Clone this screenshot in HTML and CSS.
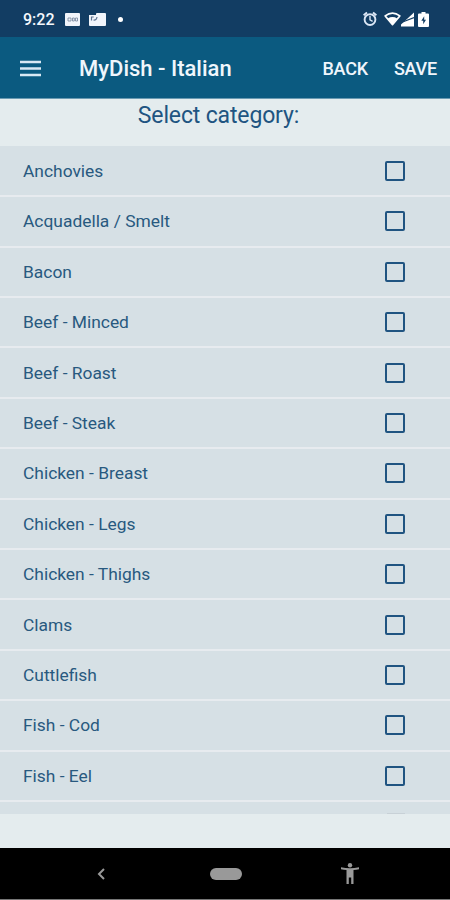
FILE: index.html
```html
<!DOCTYPE html>
<html lang="en">
<head>
    <meta charset="UTF-8">
    <meta name="viewport" content="width=device-width, initial-scale=1.0">
    <title>MyDish - Italian</title>
    <link rel="stylesheet" href="styles.css">
</head>
<body>
    <div class="status-bar">
        <span class="time">9:22</span>
        <svg class="news" width="15" height="13" viewBox="0 0 15 13">
            <rect width="15" height="13" rx="1" fill="#f1f5fb"/>
            <path d="M3 5h3v3H3zM7.5 5h1.8v3H7.5zM10.5 5h2v3h-2z" fill="none" stroke="#73839a" stroke-width="0.8"/>
        </svg>
        <svg class="mail" width="17" height="13" viewBox="0 0 17 13">
            <path d="M0 2h7V1q0-1 1-1h8q1 0 1 1v11q0 1-1 1H1q-1 0-1-1z" fill="#f1f5fb"/>
            <path d="M2.5 7.5V4h2.2M4.5 7q3 .5 3.5-3" fill="none" stroke="#5d7391" stroke-width="1.2"/>
        </svg>
        <span class="dot"></span>
        <svg class="alarm" width="14" height="16" viewBox="0 0 14 16">
            <circle cx="7" cy="8.6" r="5.4" fill="none" stroke="#dce7f5" stroke-width="1.9"/>
            <path d="M.6 4.2 4 1.4M13.4 4.2 10 1.4" stroke="#dce7f5" stroke-width="2"/>
            <path d="M7 5v3.8l2.600 1.600" fill="none" stroke="#dce7f5" stroke-width="1.4"/>
        </svg>
        <svg class="wifi" width="17" height="16" viewBox="0 0 18 16">
            <path d="M1.2 4.700Q9-1 16.800 4.700L9 14z" fill="none" stroke="#fff" stroke-width="1.700" stroke-linejoin="round"/>
            <path d="M4 7.500Q9 4.500 14 7.500L9 14z" fill="#fff"/>
        </svg>
        <svg class="signal" width="13" height="15" viewBox="0 0 14 15">
            <path d="M14 0v15H0v-2z" fill="#fff"/>
            <path d="M1 10.500 14 5.500" stroke="#123d63" stroke-width="1.200"/>
        </svg>
        <svg class="battery" width="11" height="15" viewBox="0 0 11 15">
            <path d="M3.500 0h4v1.500H10q1 0 1 1V14q0 1-1 1H1q-1 0-1-1V2.500q0-1 1-1h2.500z" fill="#fff"/>
            <path d="M6.200 4.200 3.300 8.700h1.900v3.500L8 7.700H6.200z" fill="#123d63"/>
        </svg>
    </div>

    <header class="toolbar">
        <svg class="menu" width="21" height="17" viewBox="0 0 21 17">
            <path d="M0 2h21M0 8.500h21M0 15h21" stroke="#d9e9f4" stroke-width="2.400"/>
        </svg>
        <h1>MyDish - Italian</h1>
        <button type="button">BACK</button>
        <button type="button" class="save">SAVE</button>
    </header>

    <main>
        <h2>Select category:</h2>
        <div class="list">
            <label class="row"><span>Anchovies</span><input type="checkbox"></label>
            <label class="row"><span>Acquadella / Smelt</span><input type="checkbox"></label>
            <label class="row"><span>Bacon</span><input type="checkbox"></label>
            <label class="row"><span>Beef - Minced</span><input type="checkbox"></label>
            <label class="row"><span>Beef - Roast</span><input type="checkbox"></label>
            <label class="row"><span>Beef - Steak</span><input type="checkbox"></label>
            <label class="row"><span>Chicken - Breast</span><input type="checkbox"></label>
            <label class="row"><span>Chicken - Legs</span><input type="checkbox"></label>
            <label class="row"><span>Chicken - Thighs</span><input type="checkbox"></label>
            <label class="row"><span>Clams</span><input type="checkbox"></label>
            <label class="row"><span>Cuttlefish</span><input type="checkbox"></label>
            <label class="row"><span>Fish - Cod</span><input type="checkbox"></label>
            <label class="row"><span>Fish - Eel</span><input type="checkbox"></label>
            <div class="row next"><span class="box-edge"></span></div>
        </div>
    </main>

    <nav class="nav-bar">
        <svg width="8" height="12" viewBox="0 0 8 12">
            <path d="M7 1 2 6l5 5" fill="none" stroke="#999" stroke-width="2"/>
        </svg>
        <span class="home"></span>
        <svg width="18" height="21" viewBox="0 0 18 21">
            <circle cx="9" cy="2.200" r="2.200" fill="#999"/>
            <path d="M0 4.200q9 2 18 0v2q-2.500.6-5.500.9V21h-2.300v-6.500H7.800V21H5.500V7.100Q2.500 6.800 0 6.200z" fill="#999"/>
        </svg>
    </nav>
</body>
</html>
```
FILE: styles.css
```css
* {
    box-sizing: border-box;
}
body {
    margin: 0;
    height: 900px;
    display: flex;
    flex-direction: column;
    overflow: hidden;
    background-color: #e4ecee;
    color: #28597f;
    font-family: Roboto, sans-serif;
}
svg {
    display: block;
    flex: none;
}

.status-bar {
    height: 37px;
    flex: none;
    display: flex;
    align-items: center;
    padding: 1px 21px 0 23px;
    background-color: #123d63;
    color: #f4f8fd;
}
.time {
    width: 42px;
    padding-top: 1px;
    font-size: 16px;
    font-weight: 500;
    line-height: 20px;
}
.mail {
    margin-left: 9px;
}
.dot {
    width: 5px;
    height: 5px;
    margin-left: 12px;
    border-radius: 50%;
    background-color: #fff;
}
.alarm {
    margin-left: auto;
}
.wifi {
    margin-left: 7px;
}
.battery {
    margin-left: 4px;
}

.toolbar {
    height: 62px;
    flex: none;
    display: flex;
    align-items: center;
    padding: 0 13px 0 20px;
    background-color: #0b5a80;
    border-bottom: 1px solid #6a9ab2;
    color: #f0f6fc;
}
.menu {
    margin-top: 1px;
}
.toolbar h1 {
    margin: 3px 0 0 38px;
    font-size: 22px;
    font-weight: 500;
    line-height: 28px;
    white-space: nowrap;
}
.toolbar button {
    margin: 2px 0 0 auto;
    padding: 0;
    border: none;
    background: none;
    color: inherit;
    font: 500 18px/24px Roboto, sans-serif;
    letter-spacing: -0.2px;
}
.toolbar .save {
    margin-left: 26px;
}

main {
    flex: 1;
}
h2 {
    height: 47px;
    margin: 0;
    padding: 3px 13px 0 0;
    color: #205481;
    font-size: 23px;
    font-weight: 400;
    line-height: 28px;
    letter-spacing: -0.15px;
    text-align: center;
}
.list {
    height: 668px;
    padding-top: 0.9px;
    overflow: hidden;
    background-color: #d6e0e5;
}
.row {
    height: 50.4px;
    display: flex;
    align-items: center;
    justify-content: space-between;
    padding: 0 45px 0 23px;
    border-bottom: 2px solid #e7ebef;
    font-size: 17.4px;
    line-height: 22px;
}
.row input {
    appearance: none;
    width: 20px;
    height: 20px;
    margin: 0;
    border: 2px solid #205481;
    border-radius: 2px;
}
.next {
    align-items: flex-start;
    justify-content: flex-end;
    padding-top: 11px;
}
.box-edge {
    width: 18px;
    height: 2px;
    background-color: #c8d1d7;
}

.nav-bar {
    height: 52px;
    flex: none;
    display: flex;
    align-items: center;
    justify-content: space-between;
    padding: 0 91px 0 97px;
    background-color: #000;
    border-bottom: 1px solid #777;
}
.home {
    width: 32px;
    height: 12px;
    margin-left: 5px;
    border-radius: 6px;
    background-color: #999;
}
```
